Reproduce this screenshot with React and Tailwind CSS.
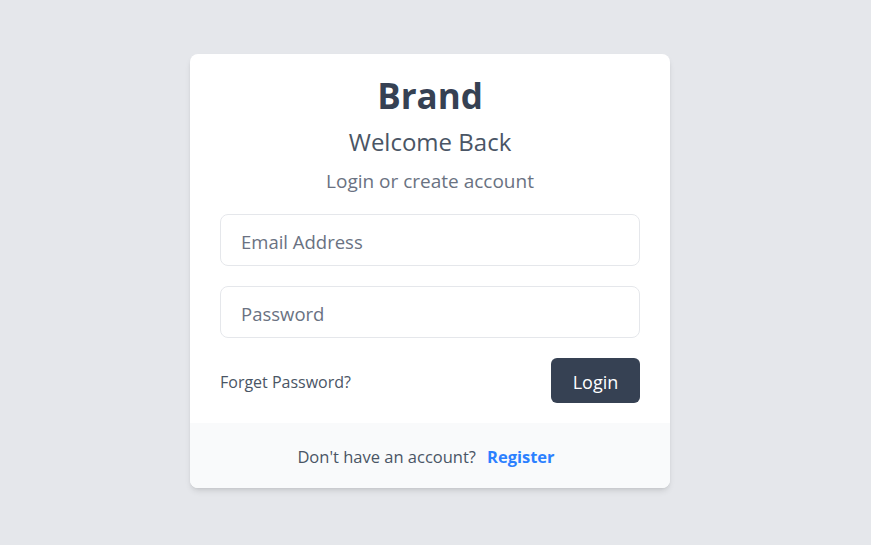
export default function App() {
    return (
        <div
            className="min-h-screen w-full bg-gray-200 flex items-center justify-center pr-[11px] pb-1"
            style={{ fontFamily: '"Open Sans", "Noto Sans", sans-serif' }}
        >
            <div className="w-[480px] bg-white rounded-lg shadow-md overflow-hidden">
                {/* Header */}
                <div className="px-[30px] pt-[18px] pb-5">
                    <div className="text-center">
                        <h1 className="text-[35px] leading-[48px] font-bold text-gray-700">Brand</h1>
                        <h2 className="mt-[6px] text-2xl leading-8 text-gray-600">Welcome Back</h2>
                        <p className="mt-[9px] text-[19px] leading-7 text-gray-500">Login or create account</p>
                    </div>

                    {/* Form */}
                    <form className="mt-[19px] flex flex-col gap-5">
                        <input
                            type="email"
                            placeholder="Email Address"
                            className="w-full h-[52px] px-5 pt-[3px] text-[18.5px] text-gray-700 placeholder-gray-500 bg-white border border-gray-200 rounded-lg outline-none"
                        />
                        <input
                            type="password"
                            placeholder="Password"
                            className="w-full h-[52px] px-5 pt-[3px] text-[18.5px] text-gray-700 placeholder-gray-500 bg-white border border-gray-200 rounded-lg outline-none"
                        />
                        <div className="flex items-center justify-between">
                            <a href="#" className="pt-[3px] text-base text-gray-600">Forget Password?</a>
                            <button
                                type="button"
                                className="h-[45px] w-[89px] pt-[3px] bg-gray-700 text-white text-lg rounded-md"
                            >
                                Login
                            </button>
                        </div>
                    </form>
                </div>

                {/* Footer */}
                <div className="h-[65px] pt-1 pr-2 bg-gray-50 flex items-center justify-center">
                    <span className="text-[16.5px] text-gray-600">Don't have an account?</span>
                    <a href="#" className="ml-[11px] text-[16.5px] font-bold text-blue-500">Register</a>
                </div>
            </div>
        </div>
    );
}
